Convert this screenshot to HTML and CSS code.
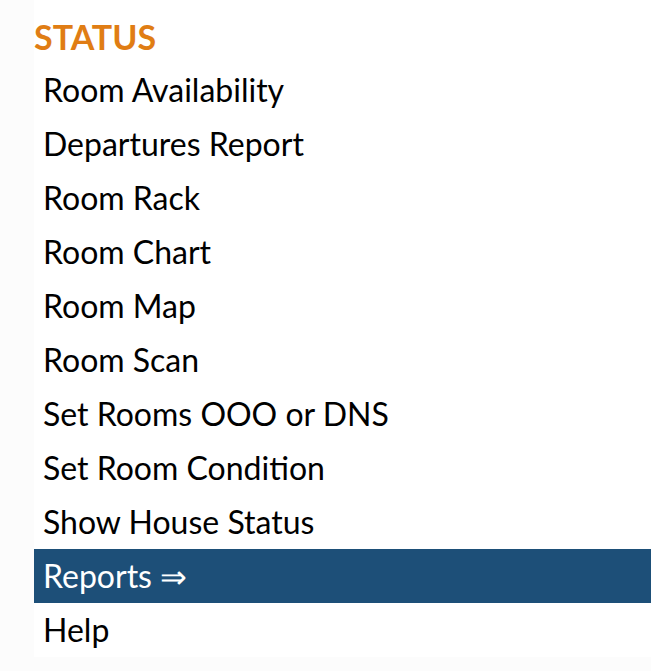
FILE: index.html
```html
<!DOCTYPE html>
<html>
<head>
<meta charset="utf-8">
<link rel="stylesheet" href="styles.css">
</head>
<body>
<div class="menu">
  <div class="menu-title">STATUS</div>
  <ul class="menu-list">
    <li class="menu-item">Room Availability</li>
    <li class="menu-item">Departures Report</li>
    <li class="menu-item">Room Rack</li>
    <li class="menu-item">Room Chart</li>
    <li class="menu-item">Room Map</li>
    <li class="menu-item">Room Scan</li>
    <li class="menu-item">Set Rooms OOO or DNS</li>
    <li class="menu-item">Set Room Condition</li>
    <li class="menu-item">Show House Status</li>
    <li class="menu-item active">Reports &rArr;</li>
    <li class="menu-item">Help</li>
  </ul>
</div>
</body>
</html>
```
FILE: styles.css
```css
html, body {
  margin: 0;
  padding: 0;
  background: #fcfcfc;
}
body {
  font-family: Lato, "Open Sans", sans-serif;
}
.menu {
  margin-left: 34px;
  background: #ffffff;
  padding-top: 11px;
  padding-bottom: 0;
}
.menu-title {
  color: #e07d14;
  font-weight: 700;
  font-size: 34px;
  line-height: 52px;
  padding-left: 0;
}
.menu-list {
  list-style: none;
  margin: 0;
  padding: 0;
}
.menu-item {
  font-size: 32px;
  line-height: 54px;
  height: 54px;
  padding-left: 9px;
  color: #000000;
}
.menu-item.active {
  background: #1d4f78;
  color: #ffffff;
}
```
